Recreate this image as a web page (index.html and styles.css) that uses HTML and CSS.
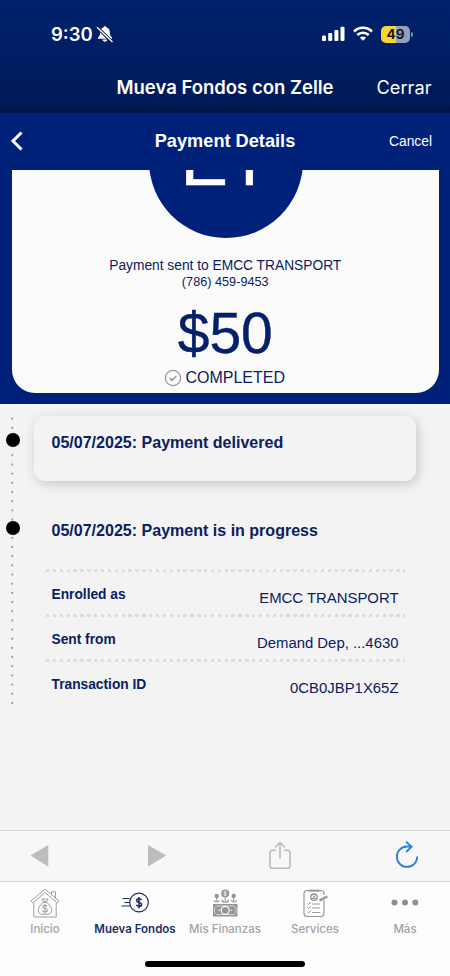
FILE: index.html
```html
<!DOCTYPE html>
<html lang="es">
<head>
<meta charset="utf-8">
<title>Payment Details</title>
<link rel="stylesheet" href="styles.css">
</head>
<body>
<header class="app-header">
  <div class="status">
    <span class="time">9:30</span>
    <svg class="bell" width="18" height="18" viewBox="0 0 18 18"><path d="M9 1.2c.9 0 1.5.6 1.6 1.4 2.300.8 3.200 2.500 3.200 4.700 0 3 .7 3.800 2.100 5.200.5.600.2 1.300-.6 1.300H2.700c-.8 0-1.100-.7-.6-1.300 1.400-1.400 2.100-2.200 2.100-5.200 0-2.200.9-3.900 3.200-4.700C7.500 1.800 8.100 1.200 9 1.200z" fill="#fff"/><path d="M6.500 14.600h5c-.3 1.300-1.200 2.200-2.500 2.200s-2.200-.9-2.500-2.200z" fill="#fff"/><path d="M1.800 2.800 16 17" stroke="#001f66" stroke-width="3.200"/><path d="M1 2.300 16.500 17" stroke="#fff" stroke-width="1.300"/></svg>
    <svg class="signal" width="23" height="16" viewBox="0 0 23 16" fill="#fff"><rect x="0" y="9.500" width="4" height="5.500" rx="1"/><rect x="6.200" y="7" width="4" height="8" rx="1"/><rect x="12.400" y="4" width="4" height="11" rx="1"/><rect x="18.500" y=".7" width="4" height="14.300" rx="1"/></svg>
    <svg class="wifi" width="20" height="16" viewBox="0 0 20 16" fill="none" stroke="#fff" stroke-width="2.500"><path d="M1 5.500a12.800 12.800 0 0 1 18 0"/><path d="M4.300 9a8.100 8.100 0 0 1 11.400 0"/><path d="M10 14.800 6.900 11.700a4.400 4.400 0 0 1 6.200 0z" fill="#fff" stroke="none"/></svg>
    <div class="battery"><span>49</span></div><i class="battery-tip"></i>
  </div>
  <div class="titlebar"><h1>Mueva Fondos con Zelle</h1><a class="close">Cerrar</a></div>
</header>
<nav class="page-nav">
  <svg class="back" width="14" height="22" viewBox="0 0 14 22"><path d="M11.500 2.500 3 11l8.500 8.500" fill="none" stroke="#fff" stroke-width="3"/></svg>
  <h2>Payment Details</h2>
  <a class="cancel">Cancel</a>
</nav>
<section class="hero">
  <div class="card">
    <div class="avatar"><span>ET</span></div>
    <p class="sent">Payment sent to EMCC TRANSPORT</p>
    <p class="phone">(786) 459-9453</p>
    <p class="amount">$50</p>
    <p class="state"><svg width="18" height="18" viewBox="0 0 18 18" fill="none" stroke="#999"><circle cx="9" cy="9" r="7.600" stroke-width="1.300"/><path d="m5.700 9.100 2.400 2.300 4.200-4.200" stroke-width="1.600"/></svg><span>COMPLETED</span></p>
  </div>
</section>
<main class="timeline">
  <div class="track"><i class="dot"></i><i class="dot"></i></div>
  <div class="events">
    <article class="event raised"><h3>05/07/2025: Payment delivered</h3></article>
    <article class="event"><h3 class="progress">05/07/2025: Payment is in progress</h3></article>
    <dl class="details">
      <div class="row"><dt>Enrolled as</dt><dd>EMCC TRANSPORT</dd></div>
      <div class="row"><dt>Sent from</dt><dd>Demand Dep, ...4630</dd></div>
      <div class="row"><dt>Transaction ID</dt><dd>0CB0JBP1X65Z</dd></div>
    </dl>
  </div>
</main>
<div class="browser-bar">
  <svg width="450" height="50" viewBox="0 0 450 50">
    <path d="M30.500 24.500 48.300 14v21.500zM166.300 24.500 148 14v21.500z" fill="#bdbdbd"/>
    <g fill="none" stroke="#b9b9b9" stroke-width="1.500"><path d="M276 19.300h-3.500a2.500 2.500 0 0 0-2.500 2.500v13a2.500 2.500 0 0 0 2.500 2.500h15a2.500 2.500 0 0 0 2.500-2.500v-13a2.500 2.500 0 0 0-2.500-2.500H284"/><path d="M280 27.500V12M275.200 16.200 280 11.500l4.800 4.700"/></g>
    <path d="M417.200 25.500a10.200 10.200 0 1 1-10.200-10h4.500M406 10.700l5.600 5-5.400 5.300" fill="none" stroke="#2b7edb" stroke-width="1.800"/>
  </svg>
</div>
<footer class="tabs">
  <div class="tab-row">
    <div class="tab">
      <svg width="30" height="30" viewBox="0 0 30 30" fill="none" stroke="#a0a0a0" stroke-width="1"><path d="M1 13 15 1.200 29 13l-1.800 1.900L15 4.600 2.800 14.900z"/><path d="M3.800 15v14h22.400V15M21.500 6.500V3.800h4V10"/><path d="M12 11h6l-1.200 2.300h-3.600zM13.200 14.500c-3.200 2.300-4.900 5.200-4.900 8 0 2.500 1.300 3.700 3.800 3.700h5.800c2.500 0 3.800-1.200 3.800-3.700 0-2.800-1.700-5.700-4.900-8z"/><path d="M17.300 18.200c-.6-.7-1.300-1-2.300-1-1.300 0-2.200.6-2.200 1.600 0 2.400 4.600 1 4.600 3.500 0 1.100-1 1.700-2.400 1.700-1.100 0-2-.4-2.600-1.200M15 15.900v9.500" stroke-width="1.100"/></svg>
      <span>Inicio</span>
    </div>
    <div class="tab active">
      <svg width="30" height="30" viewBox="0 0 30 30" fill="none" stroke="#1c2e68"><circle cx="19" cy="14.500" r="9.300" stroke-width="1.200"/><path d="M2.500 10.500h7M4.500 14.500h5.500M1.500 18h9" stroke-width="1"/><path d="M21.500 12.200c-.5-1-1.400-1.400-2.500-1.400-1.500 0-2.400.6-2.400 1.700 0 2.600 5 1.300 5 3.900 0 1.200-1.100 1.900-2.600 1.900-1.300 0-2.300-.5-2.700-1.500M19 8.900v11.300" stroke-width="1.600"/></svg>
      <span>Mueva Fondos</span>
    </div>
    <div class="tab">
      <svg width="30" height="30" viewBox="0 0 30 30" fill="#959595"><rect x="3" y="16" width="24.500" height="12.500"/><path d="M6.500 18h17.500l2 2v4.500l-2 2H6.500l-2-2V20z" fill="none" stroke="#fff" stroke-width=".6"/><circle cx="15.200" cy="22.300" r="4" fill="none" stroke="#fff" stroke-width="1.200"/><circle cx="9" cy="22.300" r=".8" fill="#fff"/><circle cx="21.500" cy="22.300" r=".8" fill="#fff"/><circle cx="15.200" cy="5.500" r="4"/><circle cx="6.700" cy="8" r="2.200"/><circle cx="23.700" cy="8" r="2.200"/><path d="M15.200 9v6M6.700 9v5M23.700 9v5" stroke="#959595"/><path d="M15 15c-1-2.500-2.500-3.200-4-3.200.4 2 1.800 3.200 4 3.200zm.4 0c1-2.500 2.500-3.200 4-3.200-.4 2-1.800 3.200-4 3.200zM6.600 14.500c-.7-1.800-1.800-2.200-3-2.200.3 1.400 1.400 2.200 3 2.200zm.2 0c.7-1.800 1.500-2.200 2.700-2.200-.3 1.400-1.100 2.200-2.700 2.200zm16.800 0c-.7-1.800-1.500-2.200-2.700-2.200.3 1.400 1.100 2.200 2.700 2.200zm.2 0c.7-1.800 1.800-2.200 3-2.200-.3 1.400-1.400 2.200-3 2.200z"/><path d="M16.600 4.200c-.4-.4-.8-.5-1.400-.5-.8 0-1.300.3-1.300.8 0 1.400 2.600.6 2.600 2 0 .5-.5.9-1.300.9-.6 0-1.200-.2-1.500-.6M15.200 2.800v5.400" fill="none" stroke="#fff" stroke-width=".7"/></svg>
      <span>Mis Finanzas</span>
    </div>
    <div class="tab">
      <svg width="30" height="30" viewBox="0 0 30 30" fill="none" stroke="#929292"><path d="M24 12v13.500a3 3 0 0 1-3 3H7a3 3 0 0 1-3-3V5.500a3 3 0 0 1 3-3h14a3 3 0 0 1 3 3V7" stroke-width="1.100"/><path d="M8.500 2.700h11" stroke-width="1.900"/><circle cx="14" cy="9.200" r="3.200" stroke-width="1.300"/><circle cx="14" cy="8.400" r="1" fill="#929292" stroke="none"/><path d="M12 11.200c.7-1.500 3.300-1.500 4 0" stroke-width="1.200"/><path d="M12 16h8M12 20h8M12 24.500h8M7.500 15.500l1.200 1 2-2.500M7.500 19.500l1.200 1 2-2.500M7.500 24l1.200 1 2-2.500" stroke-width=".9"/><path d="m19.500 12.500 7.800-4" stroke-width="2.300"/></svg>
      <span>Services</span>
    </div>
    <div class="tab">
      <svg width="30" height="30" viewBox="0 0 30 30" fill="#8e8e8e"><circle cx="4.500" cy="14.500" r="3"/><circle cx="15" cy="14.500" r="3"/><circle cx="25.300" cy="14.500" r="3"/></svg>
      <span>Más</span>
    </div>
  </div>
  <div class="home-indicator"></div>
</footer>
</body>
</html>
```
FILE: styles.css
```css
* { box-sizing: border-box; margin: 0; padding: 0; }
body { width: 450px; height: 976px; overflow: hidden; background: #f3f3f3; font-family: "Liberation Sans", Arial, sans-serif; color: #0b2060; display: flex; flex-direction: column; white-space: nowrap; }
h1, h2, h3 { font-size: inherit; }
svg { display: block; flex: none; }
.app-header { height: 113px; flex: none; background: linear-gradient(#00226c, #001e64 50%, #001a58 90%, #001549); color: #fff; font-family: Inter, sans-serif; }
.status { height: 60px; padding: 8px 37px 0 51px; display: flex; align-items: center; }
.time { font-size: 18.5px; font-weight: 600; width: 45.5px; }
.bell { width: 18px; }
.signal { margin-left: 208.5px; }
.wifi { margin-left: 8px; }
.battery { margin-left: 8px; width: 29px; height: 17px; border-radius: 5px; background: linear-gradient(90deg, #f8d52d 51%, #949fbe 51%); color: #10152a; font-size: 13.5px; font-weight: 700; line-height: 17px; text-align: center; flex: none; }
.battery-tip { width: 2px; height: 5px; margin-left: 1px; background: #7e8baf; border-radius: 0 2px 2px 0; flex: none; }
.titlebar { display: grid; grid-template-columns: 1fr auto 1fr; align-items: center; height: 53px; padding: 0 18.5px; }
.titlebar h1 { grid-column: 2; font-size: 18.5px; font-weight: 600; }
.close { justify-self: end; font-size: 18.2px; }
.page-nav { height: 57px; flex: none; background: #00217a; color: #fff; display: grid; grid-template-columns: 1fr auto 1fr; align-items: center; padding: 0 18px 1px; }
.back { margin-left: -8px; }
.page-nav h2 { font-size: 18.2px; }
.cancel { justify-self: end; font-size: 13.8px; padding-top: 1px; }
.hero { height: 234px; flex: none; background: #00217a; padding: 0 11px 11px 11.5px; }
.card { height: 223px; overflow: hidden; background: #fbfbfb; border-radius: 0 0 23px 23px; display: flex; flex-direction: column; align-items: center; }
.avatar { width: 154px; height: 154px; margin: -86.5px 0 0 1px; flex: none; border-radius: 50%; background: #00217a; color: #fff; font-size: 71px; -webkit-text-stroke: .6px #fff; display: flex; align-items: center; justify-content: center; }
.sent { font-size: 13.78px; line-height: 18px; margin-top: 19.5px; }
.phone { font-size: 12.7px; line-height: 15px; }
.amount { font-size: 57px; line-height: 60px; margin-top: 13px; color: #05206a; -webkit-text-stroke: .4px #05206a; }
.state { display: flex; align-items: center; gap: 3px; font-size: 16px; line-height: 20px; margin-top: 5px; padding-right: 1px; }
.timeline { flex: 1; display: flex; min-height: 0; }
.track { width: 34px; height: 289px; margin-top: 11px; padding: 18px 0 0 5.5px; display: flex; flex-direction: column; gap: 74px; background: radial-gradient(circle at 12.3px 3.5px, #888 .6px, #88888800 1.3px) 0 0 / 34px 9.18px repeat-y; }
.dot { width: 14px; height: 14px; border-radius: 50%; background: #000; }
.events { width: 382px; padding-top: 12px; }
.event { height: 65px; padding: 17px 17.5px; font-size: 16.05px; line-height: 18px; }
.event.raised { border-radius: 11px; box-shadow: 2px 3px 12px rgba(0,0,0,.19); margin-bottom: 23px; }
.details { margin: 0 11px 0 12px; font-size: 14.9px; }
.row { height: 44.75px; padding: 17px 6.5px 0 5.5px; display: flex; justify-content: space-between; background: repeating-linear-gradient(90deg, #dcdcdc 0 3.4px, #f3f3f3 3.4px 6.87px) 0 0 / 100% 3px no-repeat; }
.row dt { font-weight: 700; font-size: 13.75px; line-height: 18px; }
.row dd { line-height: 24px; }
.browser-bar { height: 51px; flex: none; background: #f7f7f7; border-top: 1px solid #d4d4d4; }
.tabs { height: 95px; flex: none; background: #fdfdfd; border-top: 1px solid #cfcfcf; padding-top: 6px; font: 500 11.5px/16px Inter, sans-serif; color: #a2a2a2; }
.tab-row { display: grid; grid-template-columns: repeat(5, 90px); }
.tab { display: flex; flex-direction: column; align-items: center; gap: 3px; }
.tab.active { color: #1c2e68; font-weight: 600; }
.home-indicator { width: 160px; height: 6px; margin: 24px auto 0; border-radius: 3px; background: #000; }
```
